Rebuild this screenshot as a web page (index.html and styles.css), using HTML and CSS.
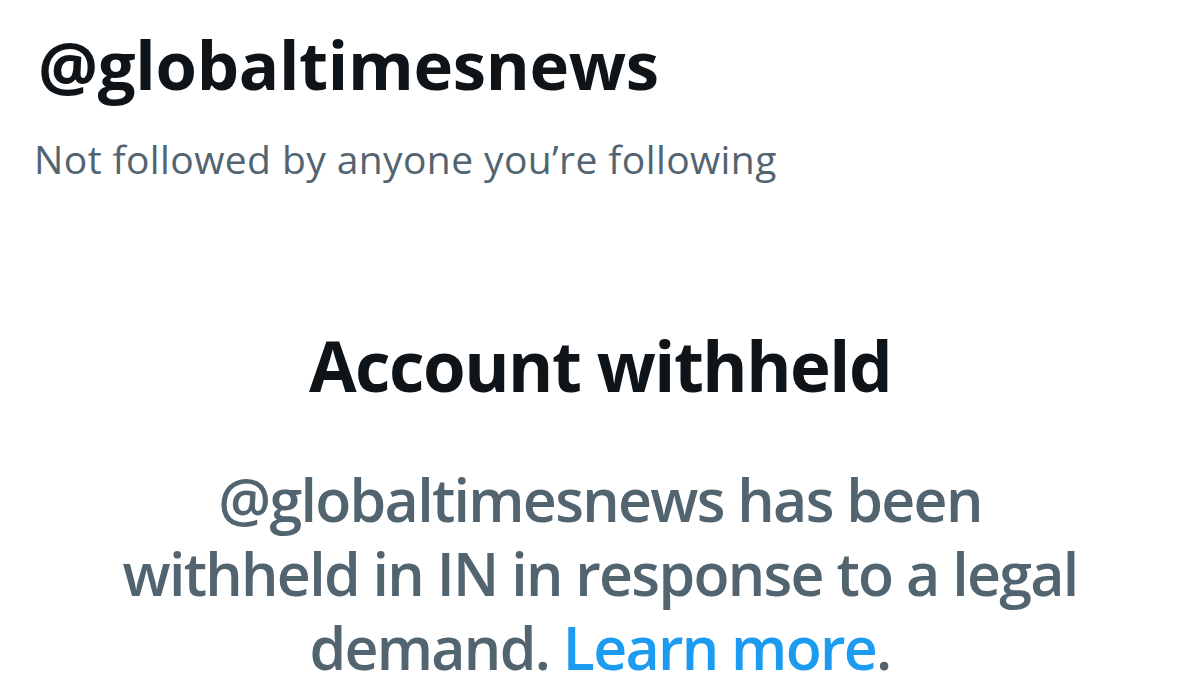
FILE: index.html
```html
<!DOCTYPE html>
<html>
<head>
<meta charset="utf-8">
<link rel="stylesheet" href="styles.css">
</head>
<body>
<div class="page">
  <header class="profile">
    <h1 class="handle">@globaltimesnews</h1>
    <p class="followers">Not followed by anyone you’re following</p>
  </header>
  <section class="withheld">
    <h2 class="title">Account withheld</h2>
    <p class="message">@globaltimesnews has been<br>withheld in IN in response to a legal<br>demand. <a class="link" href="#">Learn more</a>.</p>
  </section>
</div>
</body>
</html>
```
FILE: styles.css
```css
html, body {
  margin: 0;
  padding: 0;
  background: #ffffff;
}
.page {
  width: 1200px;
  height: 675px;
  overflow: hidden;
  font-family: "Open Sans", "Noto Sans", sans-serif;
}
.profile {
  padding: 24px 0 0 38px;
}
.handle {
  margin: 0;
  font-size: 67px;
  font-weight: 700;
  line-height: 80px;
  letter-spacing: -0.3px;
  color: #0f1419;
}
.followers {
  margin: 31px 0 0 -4px;
  font-size: 39px;
  font-weight: 400;
  line-height: 48px;
  letter-spacing: 0.4px;
  color: #536471;
}
.withheld {
  margin-top: 137px;
  text-align: center;
}
.title {
  margin: 0;
  font-size: 69px;
  font-weight: 700;
  line-height: 90px;
  letter-spacing: -1.5px;
  color: #0f1419;
}
.message {
  margin: 52px 0 0;
  font-size: 59px;
  font-weight: 650;
  line-height: 74px;
  letter-spacing: -1.7px;
  color: #536471;
}
.link {
  color: #1d9bf0;
  text-decoration: none;
}
```
